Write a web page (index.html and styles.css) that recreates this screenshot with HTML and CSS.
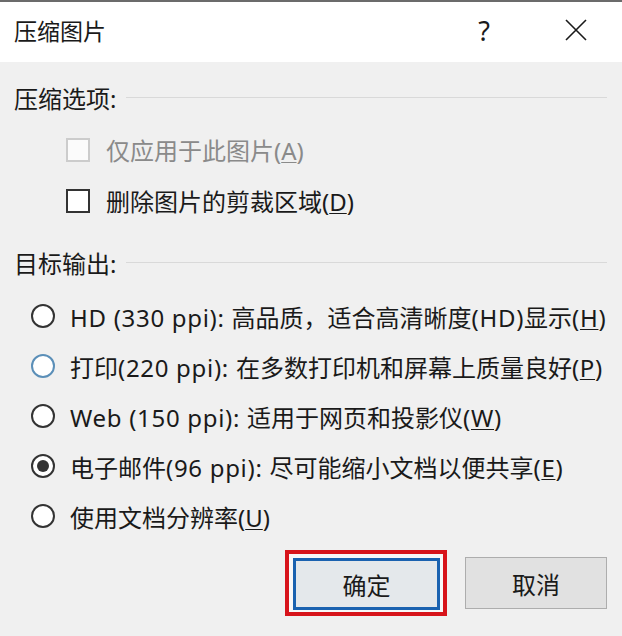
FILE: index.html
```html
<!DOCTYPE html>
<html lang="zh-CN">
<head>
<meta charset="utf-8">
<title>压缩图片</title>
<link rel="stylesheet" href="styles.css">
</head>
<body>
<div class="window">
  <div class="titlebar">
    <span class="title">压缩图片</span>
    <span class="help">?</span>
    <span class="close">
      <svg width="24" height="24" viewBox="0 0 24 24"><path d="M2 2 L22 22 M22 2 L2 22" stroke="#1a1a1a" stroke-width="1.6" fill="none"/></svg>
    </span>
  </div>
  <div class="content">
    <div class="group-header"><span>压缩选项:</span><span class="rule"></span></div>
    <div class="row check-row disabled"><span class="box"></span><span class="label">仅应用于此图片(<u>A</u>)</span></div>
    <div class="row check-row"><span class="box"></span><span class="label">删除图片的剪裁区域(<u>D</u>)</span></div>

    <div class="group-header second"><span>目标输出:</span><span class="rule"></span></div>
    <div class="row radio-row"><span class="radio"></span><span class="label"><span class="lat">HD (330 ppi): </span>高品质，适合高清晰度<span class="lat">(HD)</span>显示<span class="lat">(<u>H</u>)</span></span></div>
    <div class="row radio-row"><span class="radio hover"></span><span class="label">打印<span class="lat">(220 ppi): </span>在多数打印机和屏幕上质量良好<span class="lat">(<u>P</u>)</span></span></div>
    <div class="row radio-row"><span class="radio"></span><span class="label"><span class="lat">Web (150 ppi): </span>适用于网页和投影仪<span class="lat">(<u>W</u>)</span></span></div>
    <div class="row radio-row"><span class="radio checked"></span><span class="label">电子邮件<span class="lat">(96 ppi): </span>尽可能缩小文档以便共享<span class="lat">(<u>E</u>)</span></span></div>
    <div class="row radio-row"><span class="radio"></span><span class="label">使用文档分辨率(<u>U</u>)</span></div>

    <div class="buttons">
      <span class="highlight"><span class="btn primary">确定</span></span>
      <span class="btn">取消</span>
    </div>
  </div>
</div>
</body>
</html>
```

FILE: styles.css
```css
* { box-sizing: border-box; }
html, body { margin: 0; padding: 0; }
body {
  width: 622px;
  height: 636px;
  overflow: hidden;
  background: #f0f0f0;
  font-family: "Noto Sans", "Noto Sans CJK SC", sans-serif;
  color: #1a1a1a;
}
.window {
  width: 622px;
  height: 636px;
  border-top: 2px solid #6b6b6b;
  background: #f0f0f0;
}
.titlebar {
  height: 60px;
  background: #ffffff;
  display: flex;
  align-items: center;
  padding-left: 14px;
  padding-right: 34px;
}
.title {
  font-family: "Noto Sans CJK SC", sans-serif;
  font-size: 23px;
  flex: 1;
  margin-top: -4px;
}
.help {
  width: 40px;
  text-align: center;
  font-size: 27px;
  margin-right: 60px;
  margin-top: -4px;
}
.close {
  width: 24px;
  height: 24px;
  display: flex;
  margin-top: -4px;
}
.content {
  padding: 20px 15px 0 14px;
}
.group-header {
  height: 30px;
  display: flex;
  align-items: center;
  font-size: 24px;
  margin-bottom: 12px;
}
.group-header.second {
  margin-top: 21px;
  margin-bottom: 14px;
}
.rule {
  flex: 1;
  height: 1px;
  background: #d9d9d9;
  margin-left: 10px;
}
.row {
  display: flex;
  align-items: center;
  font-size: 24px;
  white-space: nowrap;
}
.check-row {
  height: 51px;
  padding-left: 52px;
}
.radio-row {
  height: 50px;
  padding-left: 17px;
}
.lat { letter-spacing: 0.7px; }
.label u { text-underline-offset: 2px; text-decoration-thickness: 1px; }
.box {
  width: 24px;
  height: 24px;
  border: 2px solid #333333;
  background: #ffffff;
  margin-right: 16px;
  flex: none;
}
.disabled .box { border-color: #cccccc; background: #fbfbfb; }
.disabled .label { color: #8a8a8a; }
.radio {
  width: 24px;
  height: 24px;
  border: 2px solid #333333;
  border-radius: 50%;
  background: #ffffff;
  margin-right: 15px;
  flex: none;
  display: flex;
  align-items: center;
  justify-content: center;
}
.radio.hover { border-color: #5b8fb8; }
.radio.checked::after {
  content: "";
  width: 12px;
  height: 12px;
  border-radius: 50%;
  background: #333333;
}
.buttons {
  display: flex;
  justify-content: flex-end;
  align-items: center;
  gap: 18px;
  margin-top: 9px;
}
.highlight {
  border: 4px solid #d7141b;
  padding: 4px 3px 2px 4px;
  background: #f8f8f8;
  display: flex;
}
.btn {
  width: 142px;
  height: 52px;
  border: 1px solid #adadad;
  background: #e1e1e1;
  display: flex;
  align-items: center;
  justify-content: center;
  font-family: "Noto Sans CJK SC", sans-serif;
  font-size: 24px;
}
.btn.primary {
  width: 147px;
  height: 52px;
  border: 3px solid #1a62b0;
  background: #e4e8eb;
}
```
